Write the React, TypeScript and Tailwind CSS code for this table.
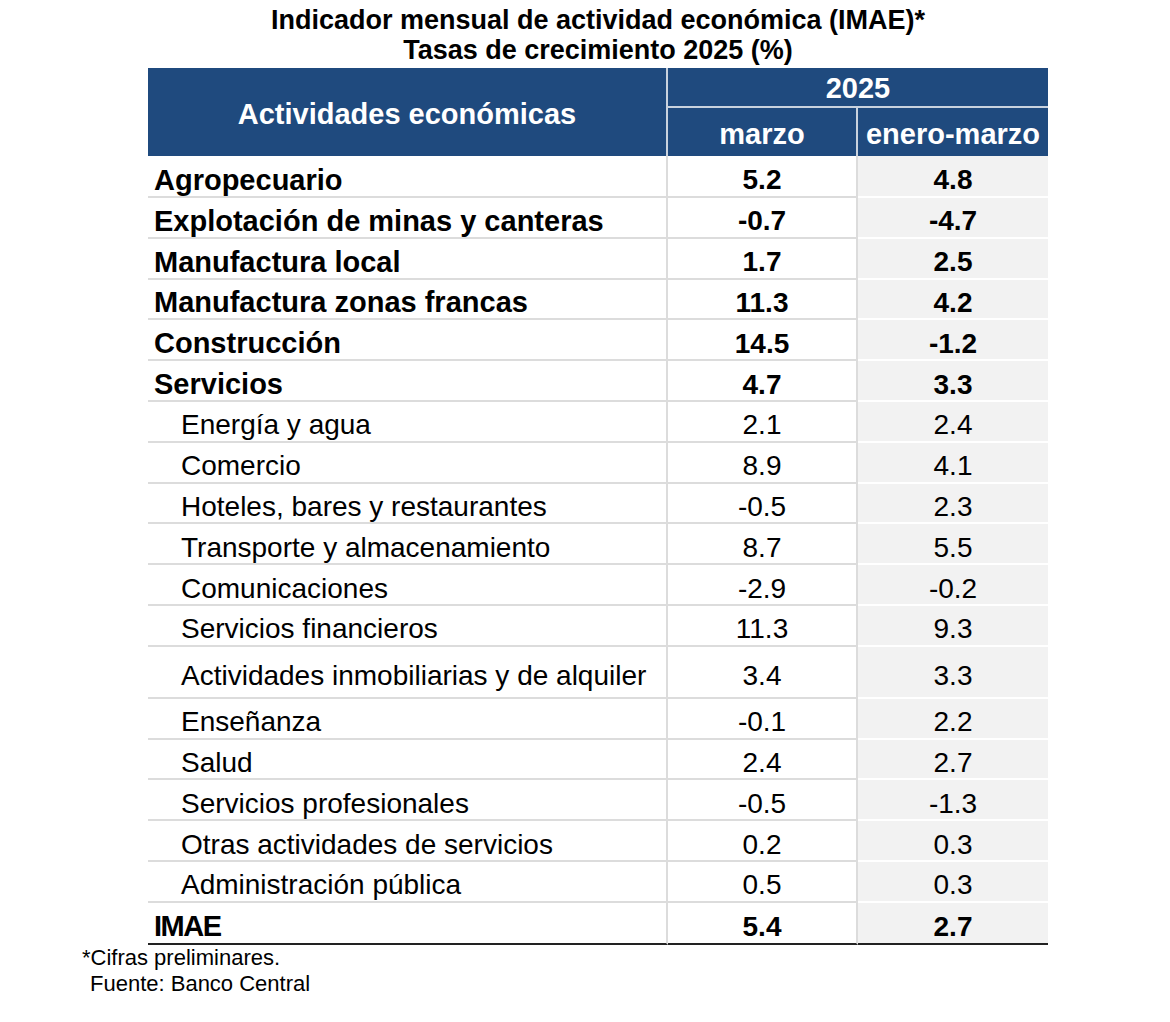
import React from "react";

type Row = { label: string; a: string; b: string; bold?: boolean; tall?: boolean };

const rows: Row[] = [
  { label: "Agropecuario", a: "5.2", b: "4.8", bold: true },
  { label: "Explotación de minas y canteras", a: "-0.7", b: "-4.7", bold: true },
  { label: "Manufactura local", a: "1.7", b: "2.5", bold: true },
  { label: "Manufactura zonas francas", a: "11.3", b: "4.2", bold: true },
  { label: "Construcción", a: "14.5", b: "-1.2", bold: true },
  { label: "Servicios", a: "4.7", b: "3.3", bold: true },
  { label: "Energía y agua", a: "2.1", b: "2.4" },
  { label: "Comercio", a: "8.9", b: "4.1" },
  { label: "Hoteles, bares y restaurantes", a: "-0.5", b: "2.3" },
  { label: "Transporte y almacenamiento", a: "8.7", b: "5.5" },
  { label: "Comunicaciones", a: "-2.9", b: "-0.2" },
  { label: "Servicios financieros", a: "11.3", b: "9.3" },
  { label: "Actividades inmobiliarias y de alquiler", a: "3.4", b: "3.3", tall: true },
  { label: "Enseñanza", a: "-0.1", b: "2.2" },
  { label: "Salud", a: "2.4", b: "2.7" },
  { label: "Servicios profesionales", a: "-0.5", b: "-1.3" },
  { label: "Otras actividades de servicios", a: "0.2", b: "0.3" },
  { label: "Administración pública", a: "0.5", b: "0.3" },
];

export default function App() {
  return (
    <div className="w-[1170px] h-[1022px] bg-white text-black font-['Liberation_Sans',Arial,sans-serif] relative">
      <div className="ml-[148px] w-[900px] pt-[5px]">
        <div className="text-center font-bold text-[27px] leading-[30px]">
          <div>Indicador mensual de actividad económica (IMAE)*</div>
          <div>Tasas de crecimiento 2025 (%)</div>
        </div>
        <div className="mt-[3px] grid grid-cols-[520px_190px_190px] text-white font-bold bg-[#1f4a7e] leading-none">
          <div className="row-span-2 h-[88px] flex items-center justify-center border-r-2 border-[#c9d2de] text-[29px] pt-[4px]">
            Actividades económicas
          </div>
          <div className="col-span-2 h-[40px] flex items-center justify-center border-b-2 border-[#c9d2de] text-[29px] pt-[2px]">
            2025
          </div>
          <div className="h-[48px] flex items-center justify-center border-r-2 border-[#c9d2de] text-[29px] pt-[4px]">
            marzo
          </div>
          <div className="h-[48px] flex items-center justify-center text-[29px] pt-[4px]">
            enero-marzo
          </div>
        </div>
        <div className="grid grid-cols-[520px_190px_190px] leading-none">
          {rows.map((r, i) => (
            <React.Fragment key={i}>
              <div
                className={`${r.tall ? "h-[52px]" : i === 0 ? "h-[42px]" : "h-[40.8px]"} flex items-center pt-[8px] border-r-2 border-b-2 border-[#dcdcdc] ${
                  r.bold ? "font-bold pl-[6px] text-[29px]" : "pl-[33px] text-[28px]"
                }`}
              >
                {r.label}
              </div>
              <div
                className={`flex items-center justify-center pt-[8px] border-r-2 border-b-2 border-[#dcdcdc] text-[28px] ${
                  r.bold ? "font-bold" : ""
                }`}
              >
                {r.a}
              </div>
              <div
                className={`flex items-center justify-center pt-[8px] bg-[#f2f2f2] border-b-2 border-white text-[28px] ${
                  r.bold ? "font-bold" : ""
                }`}
              >
                {r.b}
              </div>
            </React.Fragment>
          ))}
          <div className="h-[42px] flex items-center pt-[8px] border-r-2 border-r-[#dcdcdc] border-b-2 border-b-[#222] text-[29px] font-bold pl-[6px] tracking-[-1.5px]">
            IMAE
          </div>
          <div className="flex items-center justify-center pt-[8px] border-r-2 border-r-[#dcdcdc] border-b-2 border-b-[#222] text-[28px] font-bold">
            5.4
          </div>
          <div className="flex items-center justify-center pt-[8px] bg-[#f2f2f2] border-b-2 border-b-[#222] text-[28px] font-bold">
            2.7
          </div>
        </div>
      </div>
      <div className="ml-[82px] text-[22px] leading-[26px]">
        <div>*Cifras preliminares.</div>
        <div className="pl-[8px]">Fuente: Banco Central</div>
      </div>
    </div>
  );
}
